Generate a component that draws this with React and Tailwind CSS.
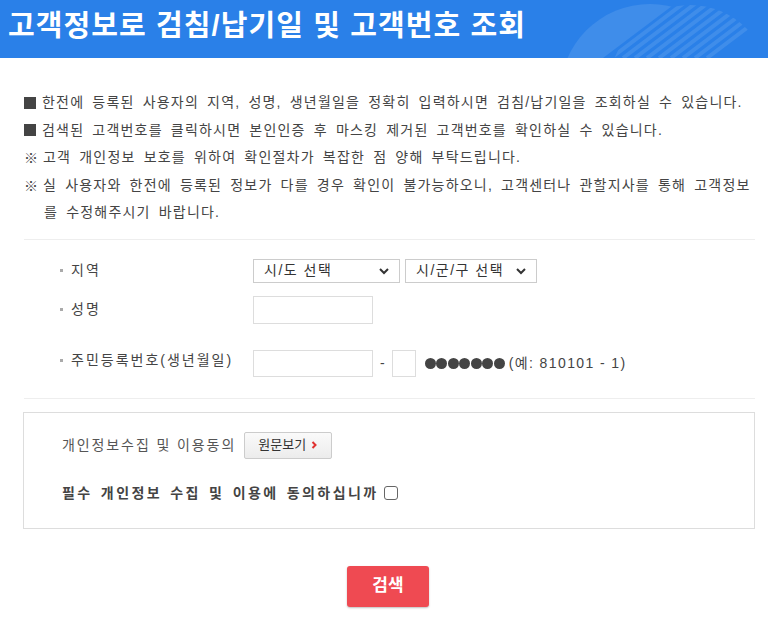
import React, { useState } from "react";

const FONT = "font-['Liberation_Sans','Noto_Sans_CJK_KR',sans-serif]";
const CJK = "font-['Noto_Sans_CJK_KR',sans-serif]";

const notices = [
  { mark: "■", text: "한전에 등록된 사용자의 지역, 성명, 생년월일을 정확히 입력하시면 검침/납기일을 조회하실 수 있습니다." },
  { mark: "■", text: "검색된 고객번호를 클릭하시면 본인인증 후 마스킹 제거된 고객번호를 확인하실 수 있습니다." },
  { mark: "※", text: "고객 개인정보 보호를 위하여 확인절차가 복잡한 점 양해 부탁드립니다." },
  {
    mark: "※",
    text: "실 사용자와 한전에 등록된 정보가 다를 경우 확인이 불가능하오니, 고객센터나 관할지사를 통해 고객정보",
    more: "를 수정해주시기 바랍니다.",
  },
];

// header circles + stripes, coords relative to x=538
const HeaderDeco = () => (
  <svg className="absolute left-[538px] top-0" width="230" height="58" viewBox="0 0 230 58">
    <defs>
      <clipPath id="leftPart">
        <polygon points="0,0 142,0 65,58 0,58" />
      </clipPath>
      <clipPath id="rightCircle">
        <circle cx="152" cy="85" r="80" />
      </clipPath>
    </defs>
    <circle cx="112" cy="94" r="90" fill="#ffffff" fillOpacity="0.1" clipPath="url(#leftPart)" />
    <g clipPath="url(#rightCircle)" stroke="#ffffff" strokeOpacity="0.1" strokeWidth="4">
      {[0, 12, 24, 36, 48, 60, 72, 84, 96].map((o) => (
        <line key={o} x1={150 + o} y1="0" x2={73 + o} y2="58" />
      ))}
    </g>
  </svg>
);

const Label = ({ children }) => (
  <div className="flex w-[229px] items-center gap-[8px] pl-[36px] text-[14px] text-[#444]">
    <span className="h-[3px] w-[3px] bg-[#aaa]" />
    <span className="tracking-[2px]">{children}</span>
  </div>
);

const Chevron = () => (
  <svg width="8" height="12" viewBox="0 0 8 12" className="ml-[4px]">
    <path d="M2.5 3 L5.5 6 L2.5 9" fill="none" stroke="#e0302f" strokeWidth="2" />
  </svg>
);

const SelectBox = ({ w, label }) => (
  <div className={`flex h-[24px] items-center justify-between border border-[#ccc] bg-white pl-[10px] pr-[9px] text-[14px] text-[#333] ${w}`}>
    <span className="tracking-[1.5px]">{label}</span>
    <svg width="12" height="10" viewBox="0 0 12 10">
      <path d="M2 3 L6 7 L10 3" fill="none" stroke="#333" strokeWidth="2" />
    </svg>
  </div>
);

export default function App() {
  const [agree, setAgree] = useState(false);

  return (
    <div className={`min-h-[617px] w-[768px] bg-white ${FONT}`}>
      <div className="relative h-[58px] overflow-hidden bg-[#2a80e8]">
        <HeaderDeco />
        <h1 className="relative pl-[8px] pt-[6px] text-[29px] font-bold leading-[40px] tracking-[1.1px] text-white">
          고객정보로 검침/납기일 및 고객번호 조회
        </h1>
      </div>

      <div className="px-[24px] pt-[31px] pr-[13px]">
        <ul className="text-[14px] leading-[27.5px] tracking-[1.2px] text-[#444] [word-spacing:3px]">
          {notices.map((n, i) => (
            <li key={i} className="whitespace-nowrap">
              <div className="flex">
                {n.mark === "■" ? (
                  <span className="flex w-[18px] items-center">
                    <span className="h-[12px] w-[12px] bg-[#444]" />
                  </span>
                ) : (
                  <span className={`w-[19px] ${CJK}`}>{n.mark}</span>
                )}
                <span>{n.text}</span>
              </div>
              {n.more && <div className="pl-[20px]">{n.more}</div>}
            </li>
          ))}
        </ul>

        <div className="mt-[12px] border-t border-[#eee]" />

        <div className="flex flex-col pt-[19px] pb-[21px]">
          <div className="flex items-center">
            <Label>지역</Label>
            <div className="flex gap-[5px]">
              <SelectBox w="w-[147px]" label="시/도 선택" />
              <SelectBox w="w-[132px]" label="시/군/구 선택" />
            </div>
          </div>

          <div className="mt-[13px] flex items-center">
            <Label>성명</Label>
            <div className="h-[28px] w-[120px] border border-[#ddd]" />
          </div>

          <div className="mt-[26px] flex items-start">
            <Label>주민등록번호(생년월일)</Label>
            <div className="flex h-[27px] items-center">
              <div className="h-[27px] w-[120px] border border-[#ddd]" />
              <span className="mx-[7px] text-[14px] text-[#444]">-</span>
              <div className="h-[27px] w-[24px] border border-[#ddd]" />
              <span className="ml-[9px] flex gap-[0.5px]">
                {[0, 1, 2, 3, 4, 5, 6].map((d) => (
                  <span key={d} className="h-[11px] w-[11px] rounded-full bg-[#444]" />
                ))}
              </span>
              <span className="ml-[4px] text-[14px] tracking-[1.4px] text-[#444]">(예: 810101 - 1)</span>
            </div>
          </div>
        </div>

        <div className="border-t border-[#eee]" />

        <div className="ml-[-1px] mt-[13px] border border-[#ddd] px-[38px] pb-[24px] pt-[19px]">
          <div className="flex items-center">
            <span className="text-[14px] tracking-[1.9px] text-[#555]">개인정보수집 및 이용동의</span>
            <button className="ml-[8px] flex h-[27px] w-[88px] items-center justify-center rounded-[2px] border border-[#ccc] bg-gradient-to-b from-[#fafafa] to-[#ececec] text-[13px] text-[#333]">
              원문보기
              <Chevron />
            </button>
          </div>
          <label className="mt-[24px] flex items-center">
            <span className="text-[14px] font-bold tracking-[2.4px] text-[#444] [word-spacing:2px]">
              필수 개인정보 수집 및 이용에 동의하십니까
            </span>
            <input
              type="checkbox"
              checked={agree}
              onChange={(e) => setAgree(e.target.checked)}
              className="ml-[5px] h-[14px] w-[14px] appearance-none rounded-[3px] border border-[#666] bg-white checked:bg-[#444]"
            />
          </label>
        </div>

        <div className="flex justify-center pr-[3px] pt-[37px]">
          <button className="h-[41px] w-[82px] rounded-[3px] bg-[#ef4a52] text-[17px] font-bold text-white shadow-[0_1px_2px_rgba(0,0,0,0.25)]">
            검색
          </button>
        </div>
      </div>
    </div>
  );
}
